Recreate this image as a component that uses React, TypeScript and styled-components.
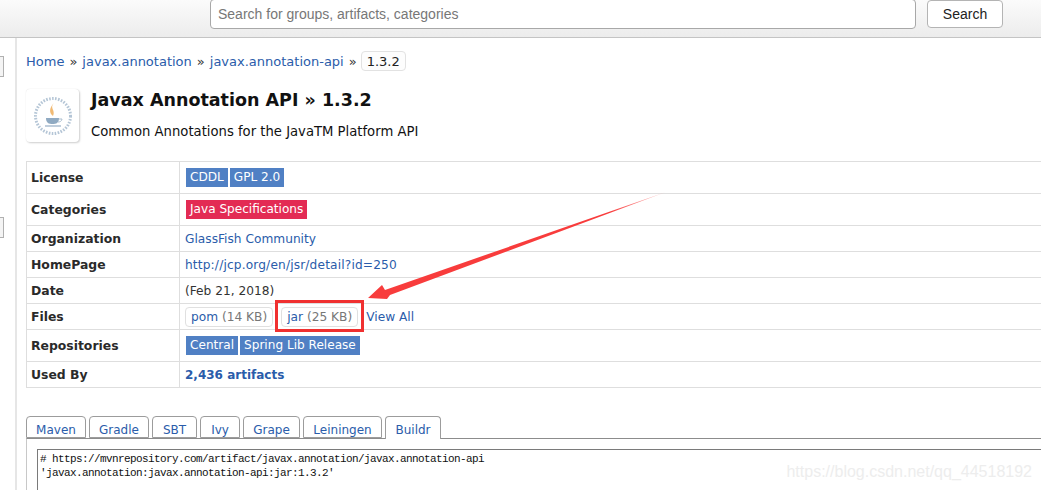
import React from "react";
import styled, { createGlobalStyle } from "styled-components";

const LINK = "#2a5caa";
const BADGE_BLUE = "#5080c4";
const LINE = "#dedede";
const VERDANA = `"DejaVu Sans", Verdana, sans-serif`;

interface Row {
  label: string;
  kind: "tags" | "cats" | "link" | "url" | "text" | "files" | "bold";
  values: string[];
}

const ROWS: Row[] = [
  { label: "License", kind: "tags", values: ["CDDL", "GPL 2.0"] },
  { label: "Categories", kind: "cats", values: ["Java Specifications"] },
  { label: "Organization", kind: "link", values: ["GlassFish Community"] },
  { label: "HomePage", kind: "url", values: ["http://jcp.org/en/jsr/detail?id=250"] },
  { label: "Date", kind: "text", values: ["(Feb 21, 2018)"] },
  { label: "Files", kind: "files", values: [] },
  { label: "Repositories", kind: "tags", values: ["Central", "Spring Lib Release"] },
  { label: "Used By", kind: "bold", values: ["2,436 artifacts"] },
];

const TABS = [
  { name: "Maven", width: 60 },
  { name: "Gradle", width: 60 },
  { name: "SBT", width: 45 },
  { name: "Ivy", width: 40 },
  { name: "Grape", width: 57 },
  { name: "Leiningen", width: 79 },
  { name: "Buildr", width: 56 },
];

const App = () => {
  const renderValue = (row: Row) => {
    switch (row.kind) {
      case "tags":
        return (
          <Tags>
            {row.values.map((v) => (
              <Tag key={v}>{v}</Tag>
            ))}
          </Tags>
        );
      case "cats":
        return (
          <Tags>
            <Tag $red>{row.values[0]}</Tag>
          </Tags>
        );
      case "link":
        return <TextLink>{row.values[0]}</TextLink>;
      case "url":
        return <UrlLink>{row.values[0]}</UrlLink>;
      case "bold":
        return <BoldLink>{row.values[0]}</BoldLink>;
      case "files":
        return (
          <Files>
            <FileChip>
              <TextLink>pom</TextLink> (14 KB)
            </FileChip>
            <FileChip>
              <TextLink>jar</TextLink> (25 KB)
            </FileChip>
            <TextLink>View All</TextLink>
          </Files>
        );
      default:
        return <span>{row.values[0]}</span>;
    }
  };

  return (
    <Page>
      <GlobalStyle />
      <Header>
        <SearchInput placeholder="Search for groups, artifacts, categories" readOnly />
        <SearchButton>Search</SearchButton>
      </Header>
      <Body>
        <Sidebar>
          <SideStub />
          <SideStub />
        </Sidebar>
        <Main>
          <Breadcrumb>
            <TextLink>Home</TextLink>
            <Sep>»</Sep>
            <TextLink>javax.annotation</TextLink>
            <Sep>»</Sep>
            <TextLink>javax.annotation-api</TextLink>
            <Sep>»</Sep>
            <Version>1.3.2</Version>
          </Breadcrumb>
          <Heading>
            <LogoBox>
              <LogoArt width="44" height="44" viewBox="0 0 44 44">
                <circle cx="22" cy="22" r="17.500" fill="none" stroke="#a8bccf" strokeWidth="3" strokeDasharray="1.600 1.400" />
                <path d="M23 9c-5 5 2 7-1 13-4-3-4-8 1-13z" fill="#efae5c" />
                <path d="M15 24h13c0 5-3 6-6.500 6S15 29 15 24z" fill="#7d9cb8" />
                <path d="M14 32h16" stroke="#9db3c8" strokeWidth="1.500" />
                <path d="M28 25h3c0 2-2 3-4 3" fill="none" stroke="#9db3c8" />
              </LogoArt>
            </LogoBox>
            <div>
              <Title>Javax Annotation API » 1.3.2</Title>
              <Subtitle>Common Annotations for the JavaTM Platform API</Subtitle>
            </div>
          </Heading>
          <InfoTable>
            <tbody>
              {ROWS.map((row) => (
                <InfoRow key={row.label} $tall={row.kind === "tags" || row.kind === "cats"}>
                  <LabelCell>{row.label}</LabelCell>
                  <ValueCell>{renderValue(row)}</ValueCell>
                </InfoRow>
              ))}
            </tbody>
          </InfoTable>
          <TabBar>
            {TABS.map((t) => (
              <Tab key={t.name} $width={t.width} $active={t.name === "Buildr"}>
                {t.name}
              </Tab>
            ))}
          </TabBar>
          <TabPanel>
            <CodeBox>
              {"# https://mvnrepository.com/artifact/javax.annotation/javax.annotation-api\n'javax.annotation:javax.annotation-api:jar:1.3.2'"}
            </CodeBox>
          </TabPanel>
        </Main>
      </Body>
      <RedBox />
      <Arrow width="1041" height="490" viewBox="0 0 1041 490">
        <defs>
          <linearGradient id="arrowFade" x1="666" y1="192" x2="610" y2="212" gradientUnits="userSpaceOnUse">
            <stop offset="0" stopColor="#f83c3c" stopOpacity="0.25" />
            <stop offset="1" stopColor="#f83c3c" />
          </linearGradient>
        </defs>
        <polygon
          points="368,298 382,285 385,290 666,192 390,295 387,299"
          fill="url(#arrowFade)"
        />
      </Arrow>
      <Watermark>https://blog.csdn.net/qq_44518192</Watermark>
    </Page>
  );
};

export default App;

const GlobalStyle = createGlobalStyle`
  html, body {
    margin: 0;
    padding: 0;
    background: #fff;
  }
  body {
    font-family: ${VERDANA};
    font-size: 13px;
    color: #222;
  }
`;

const Page = styled.div`
  position: relative;
  width: 1041px;
  height: 490px;
  overflow: hidden;
`;

const Header = styled.header`
  display: flex;
  align-items: flex-start;
  gap: 11px;
  box-sizing: border-box;
  height: 38px;
  padding-left: 210px;
  background: linear-gradient(#fbfbfb, #ececec);
  border-bottom: 1px solid #c4c4c4;
`;

const SearchInput = styled.input`
  box-sizing: border-box;
  width: 706px;
  height: 30px;
  margin-top: -1px;
  padding: 0 7px;
  background: #fff;
  border: 1px solid #a8a8a8;
  border-radius: 4px;
  font-family: "Liberation Sans", Arial, sans-serif;
  font-size: 14px;
  outline: none;
  &::placeholder {
    color: #777;
    opacity: 1;
  }
`;

const SearchButton = styled.button`
  box-sizing: border-box;
  width: 76px;
  height: 28px;
  background: #fff;
  border: 1px solid #b4b4b4;
  border-radius: 4px;
  font-family: "Liberation Sans", Arial, sans-serif;
  font-size: 14px;
  color: #222;
`;

const Body = styled.div`
  display: flex;
`;

const Sidebar = styled.aside`
  flex: none;
  display: flex;
  flex-direction: column;
  gap: 140px;
  box-sizing: border-box;
  width: 17px;
  height: 452px;
  padding-top: 18px;
  border-right: 2px solid #e6e6e6;
`;

const SideStub = styled.div`
  box-sizing: border-box;
  width: 4px;
  height: 21px;
  background: #f4f4f4;
  border: 1px solid #b0b0b0;
  border-left: none;
`;

const Main = styled.main`
  flex: none;
  width: 1024px;
  padding-left: 9px;
`;

const Breadcrumb = styled.nav`
  display: flex;
  align-items: center;
  gap: 5px;
  height: 20px;
  margin-top: 13px;
`;

const TextLink = styled.a`
  color: ${LINK};
`;

const UrlLink = styled(TextLink)`
  letter-spacing: 0.15px;
`;

const Sep = styled.span`
  color: #333;
`;

const Version = styled.span`
  box-sizing: border-box;
  display: inline-flex;
  align-items: center;
  justify-content: center;
  width: 45px;
  height: 20px;
  margin-left: -1px;
  color: #222;
  background: #fdfdfd;
  border: 1px solid #e2e2e2;
  border-radius: 4px;
`;

const Heading = styled.div`
  display: flex;
  gap: 12px;
  margin-top: 18px;
  height: 72px;
`;

const LogoBox = styled.div`
  box-sizing: border-box;
  display: flex;
  align-items: center;
  justify-content: center;
  width: 53px;
  height: 53px;
  background: #fff;
  border-radius: 4px;
  box-shadow: 1px 1px 2px #cfcfcf, 0 0 1px #ddd;
`;

const LogoArt = styled.svg`
  filter: blur(0.6px);
  opacity: 0.85;
`;

const Title = styled.h1`
  margin: 0;
  font-size: 17.5px;
  line-height: 22px;
  font-weight: bold;
  color: #111;
`;

const Subtitle = styled.p`
  margin: 10px 0 0;
  font-size: 13.2px;
  line-height: 22px;
  color: #111;
`;

const InfoTable = styled.table`
  width: 1020px;
  border-collapse: collapse;
  border: 1px solid ${LINE};
  border-right: none;
`;

const InfoRow = styled.tr<{ $tall: boolean }>`
  height: ${(p) => (p.$tall ? "32px" : "26px")};
  border-bottom: 1px solid ${LINE};
`;

const LabelCell = styled.td`
  box-sizing: border-box;
  width: 153px;
  padding: 0 0 0 4px;
  font-size: 12.4px;
  font-weight: bold;
  color: #2a2a2a;
  border-right: 1px solid ${LINE};
`;

const ValueCell = styled.td`
  padding: 0 0 0 5px;
  font-size: 12.2px;
  color: #333;
`;

const Tags = styled.div`
  display: flex;
  gap: 2px;
  padding-left: 1px;
`;

const Tag = styled.span<{ $red?: boolean }>`
  display: inline-block;
  height: 19px;
  padding: 0 4px;
  font-size: 12.1px;
  line-height: 19px;
  color: #fff;
  background: ${(p) => (p.$red ? "#e32b54" : BADGE_BLUE)};
`;

const Files = styled.div`
  display: flex;
  align-items: center;
  gap: 8px;
`;

const FileChip = styled.span`
  box-sizing: border-box;
  display: inline-block;
  height: 20px;
  padding: 0 5px;
  line-height: 18px;
  color: #777;
  border: 1px solid #e0e0e0;
  border-radius: 4px;
  white-space: pre;
`;

const BoldLink = styled.a`
  font-size: 12px;
  font-weight: bold;
  color: ${LINK};
`;

const TabBar = styled.div`
  display: flex;
  gap: 3px;
  margin-top: 28px;
  height: 22px;
`;

const Tab = styled.div<{ $active?: boolean; $width: number }>`
  box-sizing: border-box;
  width: ${(p) => p.$width}px;
  height: ${(p) => (p.$active ? "23px" : "22px")};
  padding-top: 6px;
  font-size: 12px;
  text-align: center;
  color: ${LINK};
  background: #fff;
  border: 1px solid #9c9c9c;
  border-bottom: ${(p) => (p.$active ? "none" : "1px solid #9c9c9c")};
  border-radius: 4px 4px 0 0;
  position: relative;
  z-index: 1;
`;

const TabPanel = styled.div`
  box-sizing: border-box;
  width: 1020px;
  height: 60px;
  padding: 10px 0 0 10px;
  border-top: 1px solid #8c8c8c;
  border-left: 1px solid #c8c8c8;
`;

const CodeBox = styled.pre`
  box-sizing: border-box;
  height: 60px;
  margin: 0;
  padding: 2px 2px;
  font-family: "Liberation Mono", monospace;
  font-size: 11px;
  letter-spacing: -0.6px;
  line-height: 14px;
  color: #111;
  border: 1px solid #7a7a7a;
`;

const RedBox = styled.div`
  position: absolute;
  left: 275px;
  top: 300px;
  width: 83px;
  height: 26px;
  border: 3px solid #f03030;
`;

const Arrow = styled.svg`
  position: absolute;
  left: 0;
  top: 0;
  pointer-events: none;
`;

const Watermark = styled.div`
  position: absolute;
  right: 9px;
  top: 463px;
  font-family: "Liberation Sans", Arial, sans-serif;
  font-size: 16px;
  color: #ededed;
`;
